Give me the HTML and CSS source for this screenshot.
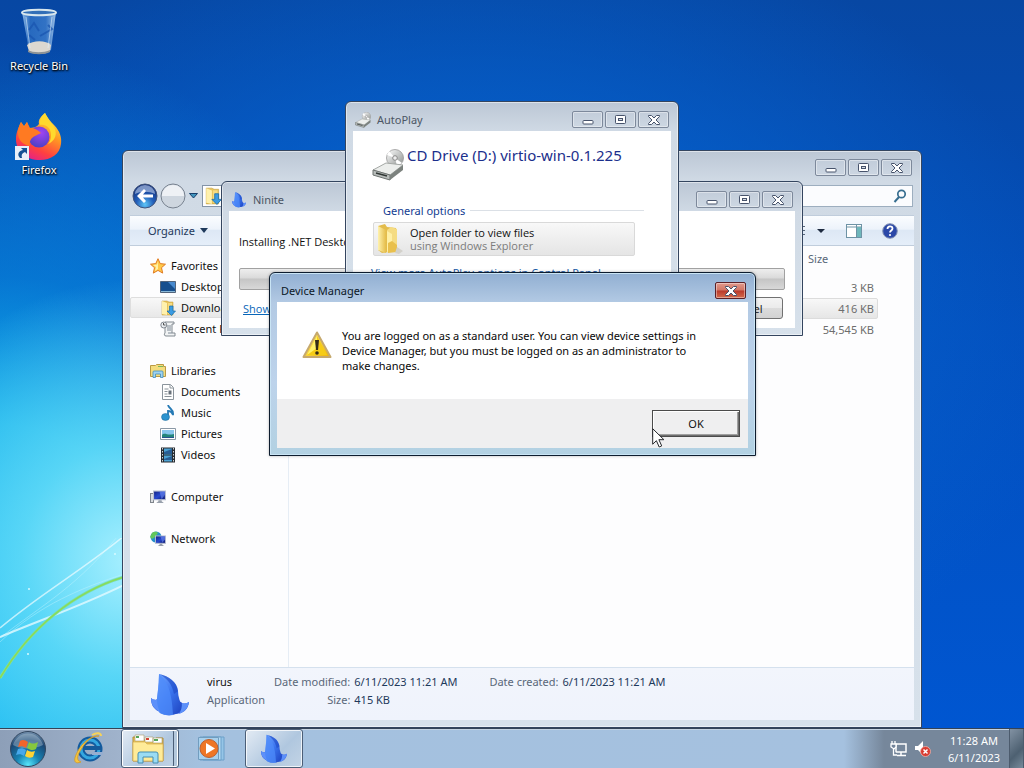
FILE: index.html
```html
<!DOCTYPE html>
<html lang="en">
<head>
<meta charset="utf-8">
<meta name="viewport" content="width=device-width, initial-scale=1">
<title>Desktop</title>
<link rel="stylesheet" href="styles.css">
</head>
<body>
<svg class="defs" aria-hidden="true">
  <defs>
    <linearGradient id="gFin" x1="0" y1="0" x2="1" y2="1"><stop offset="0" stop-color="#77aaff"/><stop offset=".5" stop-color="#3a74ee"/><stop offset="1" stop-color="#1c40bd"/></linearGradient>
    <linearGradient id="gFolder" x1="0" y1="0" x2="1" y2="0"><stop offset="0" stop-color="#fff2ae"/><stop offset="1" stop-color="#e5bd4a"/></linearGradient>
    <radialGradient id="gBlue" cx=".5" cy=".85" r=".8"><stop offset="0" stop-color="#5fc7f7"/><stop offset=".45" stop-color="#235fba"/><stop offset="1" stop-color="#122f78"/></radialGradient>
    <linearGradient id="gMetal" x1="0" y1="0" x2="1" y2="1"><stop offset="0" stop-color="#fff"/><stop offset="1" stop-color="#8b8f8d"/></linearGradient>
    <linearGradient id="gWarn" x1="0" y1="0" x2="1" y2="1"><stop offset="0" stop-color="#fff27a"/><stop offset="1" stop-color="#f0b400"/></linearGradient>
    <linearGradient id="gScreen" x1="0" y1="0" x2="1" y2="1"><stop offset="0" stop-color="#14217e"/><stop offset=".5" stop-color="#2748cf"/><stop offset="1" stop-color="#0a1468"/></linearGradient>
    <radialGradient id="gOrb" cx=".5" cy=".95" r=".95"><stop offset="0" stop-color="#58e6fa"/><stop offset=".35" stop-color="#1784b4"/><stop offset=".75" stop-color="#1b4673"/><stop offset="1" stop-color="#7894b0"/></radialGradient>
    <linearGradient id="gFox" x1=".8" y1="0" x2=".3" y2="1"><stop offset="0" stop-color="#fff04a"/><stop offset=".4" stop-color="#ff9a22"/><stop offset=".75" stop-color="#ff4040"/><stop offset="1" stop-color="#e3208c"/></linearGradient>
    <radialGradient id="gPurple" cx=".6" cy=".3" r=".8"><stop offset="0" stop-color="#a243f2"/><stop offset="1" stop-color="#4340c0"/></radialGradient>
    <linearGradient id="gBin" x1="0" y1="0" x2="1" y2="0"><stop offset="0" stop-color="#b9dcf8" stop-opacity=".8"/><stop offset=".25" stop-color="#3d80d0" stop-opacity=".6"/><stop offset=".7" stop-color="#4e8fda" stop-opacity=".6"/><stop offset="1" stop-color="#c0dcf4" stop-opacity=".85"/></linearGradient>
    <symbol id="fin" viewBox="0 0 40 44">
      <path d="M1 25c0 7 3 11 7 13l16 3c9 0 14-4 15-12-3 2-6 2-8 0L8 25l-2 2c-2 0-4-1-5-2z" fill="#2d57d6"/>
      <path d="M9 1c10 2 18 8 19 17 0 6 2 11 5 17l-5 5c-6 3-12 3-18 0l-4-5C7 24 9 12 9 1z" fill="url(#gFin)"/>
      <path d="M9 1c7 6 13 15 14 41-5 1-9 0-13-2l-4-5C7 24 9 12 9 1z" fill="#4e8bfa" opacity=".75"/>
      <path d="M9 1c8 4 13 10 15 20l4-3C27 9 19 3 9 1z" fill="#173fbb" opacity=".5"/>
      <path d="M1 25c0 7 3 11 9 14-2-4-3-8-3-12-2 0-5-1-6-2zm38 4c-1 7-5 10-10 12 2-3 3-7 3-11 2 1 5 0 7-1z" fill="#5c90fa"/>
    </symbol>
    <symbol id="folder-down" viewBox="0 0 16 16">
      <path d="M2 1h5l2 1h4v13H2z" fill="#e8c45c" stroke="#c09a35" stroke-width=".5"/><path d="M2 1l5 2v12l-5-1z" fill="#fff1ad"/><path d="M8 3h4v11H8z" fill="#f6dc83"/>
      <path d="M9.500 6h3.500v5h2.500L11.500 15.500 7 11h2.500z" fill="#3b9be2" stroke="#176ba8" stroke-width=".7"/>
    </symbol>
    <symbol id="drive" viewBox="0 0 32 32">
      <circle cx="23" cy="9" r="8.500" fill="url(#gMetal)" stroke="#999" stroke-width=".8"/><path d="M23 9L15 6l2-4zM23 9l7 5-5 3z" fill="#fff"/><circle cx="23" cy="9" r="2.300" fill="#eee" stroke="#888"/>
      <path d="M1 21l13-7 17 2-13 10z" fill="#eceeec" stroke="#a4a8a5"/><path d="M1 21l17 5v5L1 26z" fill="#b7bcba" stroke="#6d7270"/><path d="M18 26l13-10v5L18 31z" fill="#7c827e"/><path d="M4 24l11 3" stroke="#303633" stroke-width="1.500"/>
    </symbol>
    <symbol id="i-min" viewBox="0 0 14 12"><rect x="2" y="6.500" width="10" height="3.500" rx=".8" fill="#fff" stroke="#47536b"/></symbol>
    <symbol id="i-max" viewBox="0 0 14 12"><rect x="1.500" y="1.500" width="10" height="8" rx=".8" fill="#fff" stroke="#47536b"/><rect x="4.500" y="4.500" width="4" height="2" fill="#d4dbe4" stroke="#47536b"/></symbol>
    <symbol id="i-close" viewBox="0 0 14 12"><path d="M1.500 1.500h3L7 4l2.500-2.500h3v1L9 6l3.500 3.500v1h-3L7 8l-2.500 2.500h-3v-1L5 6 1.500 2.500z" fill="#fff" stroke="#47536b" stroke-linejoin="round"/></symbol>
    <symbol id="i-monitor" viewBox="0 0 12 12"><rect x=".5" y=".5" width="11" height="8" fill="url(#gScreen)" stroke="#b8bed0"/><path d="M6 1h5v3L8 8z" fill="#6c89ef" opacity=".6"/><path d="M5 9h3v1l2 1.500H3L5 10z" fill="#98a0ac"/></symbol>
  </defs>
</svg>

<div class="screen">
<main class="desktop">
  <svg class="wallpaper" viewBox="0 0 124 190" aria-hidden="true">
    <path d="M0 100C40 68 80 48 124 -10M0 104C40 66 82 50 124 36" fill="none" stroke="#c8f4ff" stroke-width="1" opacity=".4"/>
    <path d="M0 100C40 66 80 44 124 8" transform="translate(0 -10)" fill="none" stroke="#effcff" stroke-width="1.500" opacity=".7"/>
    <path d="M0 99C40 82 82 68 124 47" fill="none" stroke="#e3faff" stroke-width="2" opacity=".8"/>
    <path d="M0 140C30 90 74 54 124 39" fill="none" stroke="#79dfae" stroke-width="3"/><path d="M0 140C30 90 74 54 124 39" fill="none" stroke="#8bdc56" stroke-width="1.500"/>
    <g fill="#d8faff"><circle cx="29" cy="51" r="1"/><circle cx="115" cy="16" r="1"/><circle cx="28" cy="116" r="1"/></g>
  </svg>

  <nav class="shortcuts" aria-label="Desktop shortcuts">
    <a class="shortcut" href="#bin">
      <svg width="48" height="48" viewBox="0 0 48 48" aria-hidden="true">
        <path d="M7 4h34l-5 38c-5 4-17 4-22 0z" fill="url(#gBin)"/>
        <path d="M12 37c6-5 19-5 24 0l-1 6c-5 4-16 4-21 0z" fill="#ddd8d0"/><path d="M13 42c5 3 16 3 22 0v2c-5 3-17 3-22 0z" fill="#8c9296"/>
        <path d="M14 22l5-7 5 8M33 17l4 4-12 7M14 27l6 5" fill="none" stroke="#1a55b0" stroke-width="2" opacity=".75"/>
        <path d="M11 9l4 31M37 9l-4 31" stroke="#e5f4ff" opacity=".55"/>
        <ellipse cx="24" cy="4.500" rx="17" ry="2.800" fill="#326fb7" stroke="#d7e6ed" stroke-width="2"/>
      </svg>
      <span>Recycle Bin</span>
    </a>
    <a class="shortcut" href="#firefox">
      <svg width="48" height="48" viewBox="0 0 48 48" aria-hidden="true">
        <path d="M30 1c3 5 5 8 9 12 6 6 8 13 7 19-1 10-10 16-21 16C11 48 1 40 1 27c0-7 3-12 5-17l3 4 3-4 2 6c4 0 8-1 10-4-1-4 2-8 6-11z" fill="url(#gFox)"/>
        <circle cx="24" cy="25" r="10.500" fill="url(#gPurple)"/>
        <path d="M6 10l3 5 3-5 3 6c5 0 8 2 11 5l-6 3c-4 2-6 5-5 10-7-1-12-6-12-13 0-4 1-8 3-11z" fill="#ff7a22"/>
        <path d="M25 13c6-1 11 3 11 10 0 4-1 7-3 9 7-3 10-10 6-17-3-5-7-8-9-14-4 4-6 8-5 12z" fill="#ffd92d"/>
        <rect x="0" y="34" width="14" height="14" fill="#e9eff8"/><path d="M6 36h6v6l-2-2c-3 1-4 3-3 6H5c-3-3-2-7 3-8z" fill="#155193"/>
      </svg>
      <span>Firefox</span>
    </a>
  </nav>

  <section class="window explorer" aria-label="Downloads">
    <header class="titlebar tall">
      <div class="caption"><button aria-label="Minimize"><svg><use href="#i-min"/></svg></button><button aria-label="Maximize"><svg><use href="#i-max"/></svg></button><button aria-label="Close"><svg><use href="#i-close"/></svg></button></div>
    </header>
    <div class="navrow">
      <div class="travel">
        <button aria-label="Back"><svg width="26" height="26" viewBox="0 0 26 26"><circle cx="13" cy="13" r="12" fill="url(#gBlue)" stroke="#42557c"/><path d="M3 11a10 9 0 0 1 20 0c-6-3-14-3-20 0z" fill="#b4c8ea" opacity=".65"/><path d="M5 13l7-7 2 2-3 3.500h10v3H11l3 3.500-2 2z" fill="#fff"/></svg></button>
        <button aria-label="Forward"><svg width="26" height="26" viewBox="0 0 26 26"><circle cx="13" cy="13" r="12" fill="#ced6df" stroke="#77818f"/><path d="M2 13a11 11 0 0 1 22 0z" fill="#eef1f5"/></svg></button>
        <button aria-label="Recent pages"><svg width="9" height="6" viewBox="0 0 9 6"><path d="M.5.5h8L4.500 5z" fill="#4195bd" stroke="#173e6b"/></svg></button>
      </div>
      <div class="address"><svg width="18" height="18"><use href="#folder-down"/></svg></div>
      <div class="search"><input type="text" aria-label="Search Downloads"><svg width="14" height="14" viewBox="0 0 14 14" aria-hidden="true"><circle cx="8.500" cy="5" r="3.700" fill="none" stroke="#376e90" stroke-width="1.700"/><path d="M6 8l-4.500 5" stroke="#376e90" stroke-width="2"/></svg></div>
    </div>
    <div class="toolbar">
      <button class="organize">Organize <svg width="8" height="5" viewBox="0 0 8 5" aria-hidden="true"><path d="M0 0h8L4 5z" fill="#1e395b"/></svg></button>
      <div class="tools">
        <button aria-label="Change your view"><svg width="29" height="16" viewBox="0 0 29 16"><path d="M0 3.500h8M0 7.500h8M0 11.500h8" stroke="#58677a"/><path d="M20 6h8l-4 4z" fill="#1e2b40"/></svg></button>
        <button aria-label="Show the preview pane"><svg width="16" height="14" viewBox="0 0 16 14"><rect x=".5" y=".5" width="15" height="13" fill="#fff" stroke="#6e93a5"/><path d="M1 3h14M10.500 1v12" stroke="#6e93a5"/><path d="M11 3h4v10h-4z" fill="#6fb7bb"/></svg></button>
        <button aria-label="Get help"><svg width="16" height="16" viewBox="0 0 16 16"><circle cx="8" cy="8" r="7.300" fill="#2b48a8" stroke="#8795b5"/><path d="M5.500 6c0-3.500 5-3.500 5-.5C10.500 7.500 8 7.500 8 9.500" fill="none" stroke="#fff" stroke-width="1.800"/><circle cx="8" cy="12" r="1.100" fill="#fff"/></svg></button>
      </div>
    </div>
    <div class="browse">
      <nav class="tree" aria-label="Places">
        <ul>
          <li><a href="#favorites"><svg viewBox="0 0 16 16"><path d="M8 .7l2.200 4.900 5.300.6-4 3.500 1.200 5.400L8 12.400l-4.700 2.700 1.200-5.400-4-3.500 5.300-.6z" fill="#ffc94a" stroke="#e07b22"/><path d="M8 3v8l-3 2 1-4-3-2 4-.5z" fill="#fff0a5"/></svg>Favorites</a>
            <ul>
              <li><a href="#desktop"><svg viewBox="0 0 16 16"><path d="M.5 2.500h15v11H.5z" fill="#174f8e" stroke="#52647b"/><path d="M8 3h7v7z" fill="#4789ce"/><path d="M1 12h14v1H1z" fill="#88b8d8"/></svg>Desktop</a></li>
              <li><a class="current" href="#downloads"><svg><use href="#folder-down"/></svg>Downloads</a></li>
              <li><a href="#recent"><svg viewBox="0 0 16 16"><path d="M5 1h9v2h-2v9h3v3H6c-2 0-2-2-1-3z" fill="#f1f3f4" stroke="#818990"/><path d="M7 5h4M7 7h4M7 9h4M8 12h4" stroke="#7f8a96"/><circle cx="3.800" cy="4" r="3" fill="#e9edf1" stroke="#80878f"/><path d="M3.500 2v2h2" fill="none" stroke="#555"/></svg>Recent Places</a></li>
            </ul></li>
          <li><a href="#libraries"><svg viewBox="0 0 16 16"><path d="M.5 2.500h5l1-1h7v2h2v10H.5z" fill="#f4dc7d" stroke="#ba9a44"/><path d="M8 3h5v1H8z" fill="#76b95d"/><path d="M3 14.500V9q0-1 1-1h8q1 0 1 1v5.500h-2.500V11h-5v3.500z" fill="#9fd3f0" stroke="#438dbd" stroke-width=".8"/></svg>Libraries</a>
            <ul>
              <li><a href="#documents"><svg viewBox="0 0 16 16"><path d="M2.500.5h8l3 3v12h-11z" fill="#fff" stroke="#8b949c"/><path d="M10 1v3h3M4.500 5h4M4.500 7.500h3M4.500 10h3M4.500 12.500h7" fill="none" stroke="#8b939a"/><path d="M8.500 6.500h3v4h-3z" fill="#68717a"/></svg>Documents</a></li>
              <li><a href="#music"><svg viewBox="0 0 16 16"><path d="M8 0c1 4 6 4 5 10-1-3-3-4-5-4v6" fill="none" stroke="#267ab5" stroke-width="1.800"/><ellipse cx="5.500" cy="12" rx="4" ry="3.500" fill="#2c93cf" stroke="#1b6495" stroke-width=".5"/></svg>Music</a></li>
              <li><a href="#pictures"><svg viewBox="0 0 16 16"><path d="M.5 2.500h15v11H.5z" fill="#fff" stroke="#8a98a6"/><path d="M2 4h12v8H2z" fill="#87c5ed"/><path d="M2 9c3-3 5 1 12-1v4H2z" fill="#24857b"/><path d="M2 11h12v1H2z" fill="#27538f"/></svg>Pictures</a></li>
              <li><a href="#videos"><svg viewBox="0 0 16 16"><path d="M1 .5h14v15H1z" fill="#272b31"/><path d="M4 1.500h8v6H4zM4 8.500h8v6H4z" fill="#4ca2d4"/><path d="M4 5l8-3v5H4zM4 12l8-3v4H4z" fill="#285d94"/><path d="M2.500 1v14M13.500 1v14" stroke="#ccd3d8" stroke-dasharray="1.500 1.500"/></svg>Videos</a></li>
            </ul></li>
          <li><a href="#computer"><svg viewBox="0 0 16 16"><rect x=".5" y="4.500" width="3" height="9" fill="#d9dce0" stroke="#7f858c"/><use href="#i-monitor" x="3" y="1" width="13" height="14"/></svg>Computer</a></li>
          <li><a href="#network"><svg viewBox="0 0 16 16"><circle cx="6" cy="6" r="5.500" fill="#268fc8"/><path d="M2 2c3-2 5-1 6 0L5 6 2 8 0 6zM5 8l4 1-2 3z" fill="#62c65a"/><use href="#i-monitor" x="5" y="4" width="11" height="12"/></svg>Network</a></li>
        </ul>
      </nav>
      <div class="files">
        <table>
          <thead><tr><th scope="col">Size</th></tr></thead>
          <tbody><tr><td>3 KB</td></tr><tr class="selected"><td>416 KB</td></tr><tr><td>54,545 KB</td></tr></tbody>
        </table>
      </div>
    </div>
    <footer class="details">
      <svg width="40" height="44" aria-hidden="true"><use href="#fin"/></svg>
      <div class="filename"><strong>virus</strong><span>Application</span></div>
      <dl><dt>Date modified:</dt><dd>6/11/2023 11:21 AM</dd><dt>Size:</dt><dd>415 KB</dd></dl>
      <dl><dt>Date created:</dt><dd>6/11/2023 11:21 AM</dd></dl>
    </footer>
  </section>

  <section class="window ninite" aria-label="Ninite">
    <header class="titlebar">
      <svg class="titleicon" viewBox="0 0 40 44"><use href="#fin"/></svg><h2>Ninite</h2>
      <div class="caption"><button aria-label="Minimize"><svg><use href="#i-min"/></svg></button><button aria-label="Maximize"><svg><use href="#i-max"/></svg></button><button aria-label="Close"><svg><use href="#i-close"/></svg></button></div>
    </header>
    <div class="client">
      <p>Installing .NET Desktop Runtime</p>
      <div class="progress" role="progressbar" aria-label="Installation progress"></div>
      <div class="ninite-actions"><a href="#details">Show details</a><button>Cancel</button></div>
    </div>
  </section>

  <section class="window autoplay" aria-label="AutoPlay">
    <header class="titlebar">
      <svg class="titleicon" viewBox="0 0 32 32"><use href="#drive"/></svg><h2>AutoPlay</h2>
      <div class="caption"><button aria-label="Minimize"><svg><use href="#i-min"/></svg></button><button aria-label="Maximize"><svg><use href="#i-max"/></svg></button><button aria-label="Close"><svg><use href="#i-close"/></svg></button></div>
    </header>
    <div class="client">
      <div class="device"><svg width="34" height="32" aria-hidden="true"><use href="#drive"/></svg><h1>CD Drive (D:) virtio-win-0.1.225</h1></div>
      <h3>General options</h3>
      <button class="option">
        <svg width="32" height="32" viewBox="0 0 32 32" aria-hidden="true"><path d="M4 3l7-2 2 3 9 1v23l-14 2-4-3z" fill="#e3bc4c"/><path d="M4 3l8 4v23l-8-3z" fill="url(#gFolder)"/><path d="M13 7l4-3 6 2v20l-9 3z" fill="#f5dc83"/><path d="M13 8l5 3v17l-5 1z" fill="#fff0a6"/><path d="M14 20l4-2 5 4v7l-9 1z" fill="#e9c04d"/><path d="M23 24l6 4-4 3-4-1z" fill="#d3d1cb"/></svg>
        <span>Open folder to view files<small>using Windows Explorer</small></span>
      </button>
      <a class="more" href="#autoplay">View more AutoPlay options in Control Panel</a>
    </div>
  </section>

  <section class="window active device-manager" role="alertdialog" aria-labelledby="dm-title" aria-describedby="dm-message">
    <header class="titlebar"><h2 id="dm-title">Device Manager</h2><div class="caption"><button class="red" aria-label="Close"><svg><use href="#i-close"/></svg></button></div></header>
    <div class="message">
      <svg width="30" height="28" viewBox="0 0 30 28" aria-hidden="true"><path d="M15 1.500L28.500 26H1.500z" fill="url(#gWarn)" stroke="#c6a96d" stroke-width="2" stroke-linejoin="round"/><path d="M15 5l10 19H5z" fill="#f6cc16"/><path d="M15 5v12L5 24z" fill="#fff26a"/><path d="M13 9h4l-1 10h-2z" fill="#332b18"/><circle cx="15" cy="22" r="1.800" fill="#332b18"/></svg>
      <p id="dm-message">You are logged on as a standard user. You can view device settings in Device Manager, but you must be logged on as an administrator to make changes.</p>
    </div>
    <footer><button class="ok">OK</button></footer>
  </section>

  <svg class="cursor" width="13" height="20" viewBox="0 0 13 20" aria-hidden="true"><path d="M.7.7v15.500l3.700-3.500 2.800 6.300 2.500-1.100-2.800-6.200h5z" fill="#fff" stroke="#24262b" stroke-linejoin="round"/></svg>
</main>

<footer class="taskbar">
  <nav class="pinned" aria-label="Taskbar">
    <button class="task start" aria-label="Start"><svg width="38" height="38" viewBox="0 0 38 38"><circle cx="19" cy="19" r="17.500" fill="url(#gOrb)" stroke="#31465f"/><path d="M4 15a15.500 15.500 0 0 1 30 0c-8 4-22 5-30 0z" fill="#bfd1df" opacity=".4"/><path d="M11 11c3-2 5-1 8 1l-2 6c-3-2-5-2-8-1z" fill="#f2652b"/><path d="M20 12c3 2 5 2 9 0l-2 7c-3 2-6 1-9-1z" fill="#86c83e"/><path d="M9 19c3-1 5-1 8 1l-2 6c-3-2-5-2-8-1z" fill="#47a8eb"/><path d="M18 20c3 2 5 2 8 1l-2 6c-3 1-5 1-8-1z" fill="#ffd335"/></svg></button>
    <button class="task" aria-label="Internet Explorer"><svg width="32" height="34" viewBox="0 0 32 34"><circle cx="18" cy="17" r="9" fill="none" stroke="#135b9f" stroke-width="7"/><circle cx="18" cy="17" r="9" fill="none" stroke="#35a6df" stroke-width="3"/><path d="M11 16h18" stroke="#165a9a" stroke-width="4"/><path d="M20 20h11v3h-11z" fill="#96aed0"/><path d="M27 4c-6-1-15 5-20 13-6 10-6 16 2 13-6-2-3-8 1-14C14 9 20 4 27 4z" fill="#f5c53f" stroke="#d49a25" stroke-width=".8"/><path d="M20 3c5-3 9-2 9 1" fill="none" stroke="#f8d357" stroke-width="2"/></svg></button>
    <button class="task open stacked" aria-label="Windows Explorer"><svg width="32" height="30" viewBox="0 0 32 30"><path d="M1 3h9l2 3h10l2-2h7v23H1z" fill="#eac45a" stroke="#b18a38"/><path d="M3 1h9v6H3zM13 3h8v5h-8zM21 4h9v5h-9z" fill="#fff" stroke="#a99b69" stroke-width=".6"/><path d="M4 2h3v2H4zM22 5h4v2h-4z" fill="#55a65a"/><path d="M14 4h3v2h-3z" fill="#d44435"/><path d="M1 8h12l2 2h16v17H1z" fill="#ffeb98" stroke="#d5ae47" stroke-width=".7"/><path d="M6 29V20q0-2 2-2h16q2 0 2 2v9h-5v-6H11v6z" fill="#9bdcf4" stroke="#448eb3"/></svg></button>
    <button class="task" aria-label="Windows Media Player"><svg width="28" height="26" viewBox="0 0 28 26"><path d="M5 1h21v23H5z" fill="#95c5e7" stroke="#6da0c9"/><path d="M2 1h21v23H2z" fill="#b5dcf4" stroke="#6da0c9"/><path d="M.5 1.500h20v22H.5z" fill="#a8d1ed" stroke="#719dbf"/><circle cx="11" cy="12.500" r="9" fill="#ee7625" stroke="#bd602e"/><path d="M8 7l9 5.500L8 18z" fill="#fff"/></svg></button>
    <button class="task open" aria-label="Ninite"><svg width="28" height="30"><use href="#fin"/></svg></button>
  </nav>
  <div class="tray">
    <svg width="17" height="16" viewBox="0 0 17 16" aria-label="Network"><path d="M6 3h10v8H6zM11 11v3M7 14.500h9" fill="none" stroke="#fff" stroke-width="1.500"/><path d="M1 3h5v3L4 8 1 6zM2 0v3M5 0v3M3.500 8v6H7" fill="#73849a" stroke="#fff" stroke-width="1.300"/></svg>
    <svg width="17" height="16" viewBox="0 0 17 16" aria-label="Volume muted"><path d="M1 5h3l5-5v14l-5-5H1z" fill="#fff"/><circle cx="11.500" cy="10.500" r="5" fill="#d93c32" stroke="#f0b3aa" stroke-width=".8"/><path d="M9.500 8.500l4 4m0-4l-4 4" stroke="#fff" stroke-width="1.500"/></svg>
    <time datetime="2023-06-11T11:28">11:28 AM<br>6/11/2023</time>
    <button class="peek" aria-label="Show desktop"></button>
  </div>
</footer>
</div>
</body>
</html>
```
FILE: styles.css
```css
* { box-sizing: border-box; }
body { margin: 0; font: 11px/15px "Noto Sans", "Open Sans", sans-serif; color: #111; }
h1, h2, h3, p, ul, dl, dd { margin: 0; padding: 0; font-size: inherit; font-weight: 400; }
ul { list-style: none; }
button { font: inherit; color: inherit; padding: 0; border: 0; background: none; }
a { color: inherit; text-decoration: none; }
svg { display: block; flex: none; }
.defs { position: absolute; width: 0; height: 0; }

.screen { min-height: 100vh; display: flex; flex-direction: column; }
.desktop {
  position: relative; flex: 1; overflow: hidden;
  background:
    radial-gradient(ellipse 260px 280px at 130px 560px, #a8f0ff 0%, rgba(110,226,250,.75) 42%, rgba(40,190,240,0) 100%),
    radial-gradient(ellipse 460px 620px at 0 660px, #16b8f1 0%, #12aeea 38%, rgba(8,140,222,.6) 62%, rgba(5,105,205,0) 100%),
    radial-gradient(ellipse 600px 420px at 480px 330px, #0875dc 0%, rgba(5,98,206,.7) 50%, rgba(4,80,180,0) 100%),
    linear-gradient(180deg, #0747a3 0%, #034fbd 45%, #0056d1 100%);
}
.wallpaper { position: absolute; left: 0; bottom: 0; width: 124px; height: 190px; }

.shortcuts { position: absolute; left: 0; top: 8px; width: 78px; display: flex; flex-direction: column; gap: 39px; }
.shortcut { display: flex; flex-direction: column; align-items: center; gap: 2px; color: #fff; text-shadow: 1px 1px 2px #000, 0 1px 2px #000; }

.window {
  position: absolute; display: flex; flex-direction: column;
  padding: 0 7px 7px; border: 1px solid #34455f; border-radius: 6px 6px 0 0;
  background: linear-gradient(180deg, #bcc7d5 0, #d0dae5 30px, #d7e1eb 100%);
  box-shadow: inset 0 0 0 1px rgba(255,255,255,.5);
}
.window.active { background: linear-gradient(180deg, #91afd2 0, #b3cae4 30px, #bdd3eb 60%, #b2d1e2 100%); border-color: #0d1c2e; box-shadow: inset 0 0 0 1px #c9e4f4, 0 0 3px rgba(0,0,0,.3); }
.titlebar { flex: none; height: 29px; display: flex; align-items: center; padding: 6px 2px 0; gap: 6px; color: #4c5664; }
.titlebar.tall { height: 32px; align-items: flex-start; padding-top: 8px; }
.active .titlebar { color: #0b1726; padding-left: 4px; }
.titleicon { width: 16px; height: 16px; }
.caption { display: flex; gap: 2px; margin-left: auto; }
.caption button { width: 31px; height: 17px; display: grid; place-items: center; border: 1px solid #7d899b; border-radius: 2px; box-shadow: inset 0 0 0 1px rgba(255,255,255,.4); }
.caption svg { width: 14px; height: 12px; }
.caption .red { border-color: #5b2027; background: linear-gradient(180deg, #e29a8d 0, #d17564 48%, #b9392b 52%, #d36a4b 100%); }
.client { flex: 1; background: #fff; overflow: hidden; }

.explorer { left: 122px; top: 150px; bottom: 0; width: 800px; }
.navrow { height: 32px; display: flex; align-items: center; padding: 0 1px 7px 2px; }
.travel { display: flex; align-items: center; gap: 2px; }
.travel button:last-child { padding: 0 4px 0 1px; }
.address { flex: 1; height: 22px; border: 1px solid #8494a8; background: #fff; padding: 1px; }
.search { width: 200px; height: 22px; display: flex; align-items: center; margin-left: 8px; padding-right: 5px; border: 1px solid #9daebf; background: #fbfcfe; }
.search input { flex: 1; min-width: 0; border: 0; background: none; font: inherit; }
.toolbar { flex: none; height: 31px; display: flex; align-items: center; justify-content: space-between; padding: 0 16px 0 18px; border: 1px solid #c0cddc; border-width: 1px 0; background: linear-gradient(180deg, #fbfdff 0, #edf3fb 45%, #dde8f5 50%, #e5eef9 100%); color: #1e395b; }
.organize { display: flex; align-items: center; gap: 5px; }
.tools { display: flex; align-items: center; gap: 20px; }
.browse { flex: 1; min-height: 0; display: flex; background: #fdfdfe; }
.tree { width: 159px; padding-top: 9px; border-right: 1px solid #e6edf5; }
.tree > ul { display: flex; flex-direction: column; gap: 21px; }
.tree a { height: 21px; display: flex; align-items: center; gap: 5px; padding-left: 20px; white-space: nowrap; }
.tree li li a { padding-left: 30px; }
.tree svg { width: 16px; height: 16px; }
.tree li .current { border: 1px solid #dedede; border-radius: 2px; padding-left: 29px; background: linear-gradient(180deg, #f8f8f8, #e8e8e8); }
.files { flex: 1; }
.files table { width: 589px; border-collapse: separate; border-spacing: 0; color: #6d6d6d; }
.files th { height: 24px; padding: 0 0 0 519px; text-align: left; font-weight: 400; color: #596879; vertical-align: middle; }
.files thead::after { content: ""; display: block; height: 7px; }
.files td { height: 21px; padding: 0 4px; text-align: right; }
.files .selected td { border: 1px solid #dcdcdc; border-radius: 2px; padding: 0 3px; background: linear-gradient(180deg, #f8f8f8, #e6e6e6); }
.details { flex: none; height: 53px; display: flex; align-items: flex-start; padding: 5px 20px 0; border-top: 1px solid #d5e1ee; background: linear-gradient(180deg, #f2f5fc, #eff3fc); color: #5a6779; line-height: 18px; }
.details strong { font-weight: 400; color: #111; }
.filename { display: flex; flex-direction: column; width: 67px; margin-left: 17px; }
.details dl { display: grid; grid-template-columns: auto auto; column-gap: 4px; margin-right: 32px; align-content: start; }
.details dt { text-align: right; }
.details dd { color: #1e395b; }

.ninite { left: 221px; top: 181px; width: 582px; height: 155px; }
.ninite .client { padding: 23px 10px 0; font-family: "Open Sans", sans-serif; }
.progress { height: 22px; margin: 19px 0 7px; border: 1px solid #a1a1a1; border-radius: 2px; background: linear-gradient(180deg, #eee 0, #dadada 45%, #c5c5c5 50%, #d8d8d8 100%); }
.ninite-actions { display: flex; align-items: center; justify-content: space-between; padding: 0 2px 0 4px; }
.ninite-actions a { color: #0866b8; text-decoration: underline; }
.ninite-actions button { width: 75px; height: 22px; border: 1px solid #717171; border-radius: 3px; background: linear-gradient(180deg, #f4f4f4 0, #ebebeb 49%, #dcdcdc 50%, #d2d2d2 100%); }

.autoplay { left: 345px; top: 101px; width: 334px; height: 230px; }
.autoplay .client { padding: 14px 27px 0 18px; }
.device { display: flex; gap: 2px; }
.device svg { margin-top: 4px; }
.device h1 { font-size: 15px; line-height: 20px; color: #1b2f8c; white-space: nowrap; }
.autoplay h3 { display: flex; align-items: center; gap: 5px; margin: 22px 0 4px 12px; color: #123c91; }
.autoplay h3::after { content: ""; flex: 1; height: 1px; background: #dbe0e6; }
.option { width: 262px; height: 34px; display: flex; align-items: center; gap: 4px; margin-left: 2px; border: 1px solid #d9d9d9; border-radius: 2px; background: linear-gradient(180deg, #f8f8f8, #e5e5e5); text-align: left; font-family: "Open Sans", sans-serif; line-height: 13px; }
.option small { display: block; font-size: 11px; color: #7c7c7c; }
.more { display: block; margin-top: 9px; color: #1a5ca8; }

.device-manager { left: 269px; top: 272px; width: 487px; }
.message { min-height: 97px; display: flex; align-items: flex-start; gap: 10px; padding: 26px 36px 26px 25px; background: #fff; color: #080808; }
.message svg { margin-top: 3px; }
.device-manager footer { height: 49px; display: flex; justify-content: flex-end; align-items: flex-start; padding: 11px 8px; background: #efeff0; }
.ok { width: 88px; height: 27px; background: #efeff0; border: 1px solid #4b4b4b; box-shadow: inset 1px 1px #fff, inset -1px -1px #6e6e6e, inset -2px -2px #a0a0a0; }
.cursor { position: absolute; left: 652px; top: 428px; }

.taskbar { flex: none; height: 40px; display: flex; justify-content: space-between; border-top: 1px solid #344357; box-shadow: inset 0 1px #c4d3e2; background: linear-gradient(90deg, #8d9fb8 0, #a0b3cc 122px, #a4c1df 200px, #a5c1df calc(100% - 180px), #76879b calc(100% - 140px), #76879b 100%); }
.pinned { display: flex; gap: 4px; }
.task { width: 58px; display: grid; place-items: center; }
.start { width: 55px; }
.open { border: 1px solid #4b5e77; border-radius: 3px; background: linear-gradient(135deg, #e3ebf4, #b0c7df 60%, #c3d4e5); box-shadow: inset 0 0 0 1px rgba(255,255,255,.75); }
.stacked { box-shadow: inset 0 0 0 1px #fff, inset -4px 0 #b4c8dc, inset -5px 0 #4b5e77; padding-right: 5px; }
.tray { display: flex; align-items: center; gap: 7px; color: #fff; }
.tray time { width: 66px; margin-left: 3px; text-align: center; line-height: 17px; }
.peek { width: 15px; height: 100%; border: 1px solid #4c5b6d; border-width: 0 1px; background: linear-gradient(135deg, #8292a3, #4d6071 60%, #788b9b); margin-left: -5px; }
```
